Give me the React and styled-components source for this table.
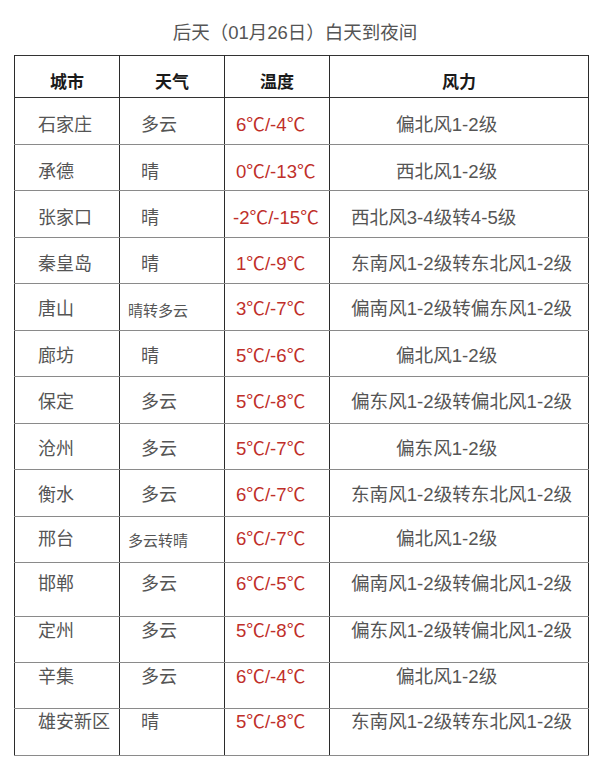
import React from 'react';
import styled, { createGlobalStyle } from 'styled-components';

const GlobalStyle = createGlobalStyle`
	html,
	body {
		margin: 0;
		padding: 0;
		background: #ffffff;
	}
	body {
		font-family: 'Liberation Sans', 'Noto Sans CJK SC', sans-serif;
	}
`;

const Page = styled.div`
	width: 600px;
	height: 775px;
	background: #ffffff;
	overflow: hidden;
`;

const Title = styled.div`
	height: 55px;
	padding-top: 22px;
	box-sizing: border-box;
	text-align: center;
	font-size: 18.5px;
	line-height: 22px;
	color: #555555;
	padding-right: 10px;
`;

const Table = styled.table`
	margin-left: 14px;
	width: 574px;
	table-layout: fixed;
	border-collapse: collapse;
	border-top: 1px solid #333333;
	border-bottom: 1px solid #8a8a8a;
`;

const HeadCell = styled.th`
	height: 42px;
	box-sizing: border-box;
	padding: 16px 0 0 0;
	vertical-align: top;
	text-align: center;
	font-family: 'Noto Sans CJK SC', sans-serif;
	font-weight: 700;
	font-size: 17px;
	line-height: 18px;
	color: #1a1a1a;
	border-left: 1px solid #2b2b2b;
	border-right: 1px solid #2b2b2b;
	border-bottom: 1px solid #333333;
`;

const Row = styled.tr`
	height: ${(p) => p.$h}px;
`;

const Cell = styled.td`
	box-sizing: border-box;
	vertical-align: top;
	padding: ${(p) => p.$pad}px 0 0 ${(p) => p.$left}px;
	font-size: ${(p) => p.$size || 18}px;
	line-height: 18px;
	white-space: nowrap;
	color: ${(p) => (p.$hot ? '#bf2f2a' : '#555555')};
	border-left: 1px solid #2b2b2b;
	border-right: 1px solid #2b2b2b;
	border-bottom: 1px solid #8a8a8a;
`;

const rows = [
	['石家庄', '多云', '6℃/-4℃', '偏北风1-2级', true],
	['承德', '晴', '0℃/-13℃', '西北风1-2级', true],
	['张家口', '晴', '-2℃/-15℃', '西北风3-4级转4-5级', false],
	['秦皇岛', '晴', '1℃/-9℃', '东南风1-2级转东北风1-2级', false],
	['唐山', '晴转多云', '3℃/-7℃', '偏南风1-2级转偏东风1-2级', false],
	['廊坊', '晴', '5℃/-6℃', '偏北风1-2级', true],
	['保定', '多云', '5℃/-8℃', '偏东风1-2级转偏北风1-2级', false],
	['沧州', '多云', '5℃/-7℃', '偏东风1-2级', true],
	['衡水', '多云', '6℃/-7℃', '东南风1-2级转东北风1-2级', false],
	['邢台', '多云转晴', '6℃/-7℃', '偏北风1-2级', true],
	['邯郸', '多云', '6℃/-5℃', '偏南风1-2级转偏北风1-2级', false],
	['定州', '多云', '5℃/-8℃', '偏东风1-2级转偏北风1-2级', false],
	['辛集', '多云', '6℃/-4℃', '偏北风1-2级', true],
	['雄安新区', '晴', '5℃/-8℃', '东南风1-2级转东北风1-2级', false],
];

// row heights and text offsets measured from the picture
const heights = [46.5, 46.5, 46.5, 46.5, 46.5, 46.5, 46.5, 46.5, 46.5, 46.5, 53.7, 46.3, 46.5, 46.5];
const pads = [18, 18, 18, 17, 16, 16, 16, 16, 16, 13, 12, 5, 5, 4];

function App() {
	return (
		<>
			<GlobalStyle />
			<Page>
				<Title>后天（01月26日）白天到夜间</Title>
				<Table>
					<colgroup>
						<col style={{ width: '105px' }} />
						<col style={{ width: '105px' }} />
						<col style={{ width: '105px' }} />
						<col style={{ width: '259px' }} />
					</colgroup>
					<thead>
						<tr>
							<HeadCell>城市</HeadCell>
							<HeadCell>天气</HeadCell>
							<HeadCell>温度</HeadCell>
							<HeadCell>风力</HeadCell>
						</tr>
					</thead>
					<tbody>
						{rows.map(([city, weather, temp, wind, short], i) => {
							const small = weather.length > 2;
							return (
								<Row key={city} $h={heights[i]}>
									<Cell $pad={pads[i]} $left={23}>
										{city}
									</Cell>
									<Cell $pad={pads[i] + (small ? 2 : 0)} $left={small ? 8 : 21} $size={small ? 15 : 18}>
										{weather}
									</Cell>
									<Cell $pad={pads[i]} $left={temp.startsWith('-') ? 8 : 11} $size={18.6} $hot>
										{temp}
									</Cell>
									<Cell $pad={pads[i]} $left={short ? 66 : 21} $size={18.6}>
										{wind}
									</Cell>
								</Row>
							);
						})}
					</tbody>
				</Table>
			</Page>
		</>
	);
}

export default App;
